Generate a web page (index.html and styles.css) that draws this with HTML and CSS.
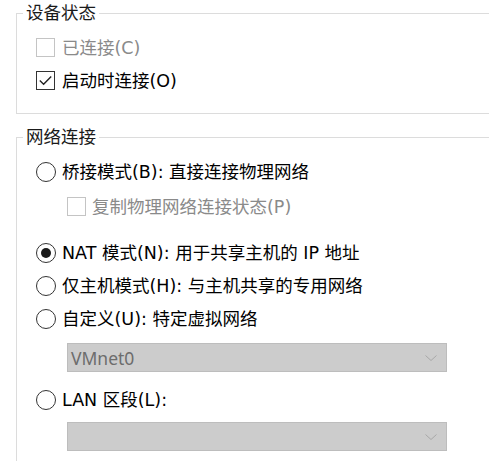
FILE: index.html
```html
<!DOCTYPE html>
<html lang="zh-CN">
<head>
<meta charset="utf-8">
<link rel="stylesheet" href="styles.css">
</head>
<body>
<div class="page">
  <fieldset class="group group-device">
    <legend class="group-title">设备状态</legend>
    <div class="group-body">
      <div class="row disabled">
        <span class="check"></span>
        <span class="label">已连接(C)</span>
      </div>
      <div class="row">
        <span class="check checked">
          <svg viewBox="0 0 19 19" width="19" height="19"><path d="M3.8 9.6 L7.6 13.2 L15.2 5.4" fill="none" stroke="#222" stroke-width="1.4"/></svg>
        </span>
        <span class="label">启动时连接(O)</span>
      </div>
    </div>
  </fieldset>

  <fieldset class="group group-net">
    <legend class="group-title">网络连接</legend>
    <div class="group-body net-body">
      <div class="row">
        <span class="radio"></span>
        <span class="label">桥接模式(B): 直接连接物理网络</span>
      </div>
      <div class="row sub disabled row-replicate">
        <span class="check"></span>
        <span class="label">复制物理网络连接状态(P)</span>
      </div>
      <div class="row row-nat">
        <span class="radio selected"></span>
        <span class="label">NAT 模式(N): 用于共享主机的 IP 地址</span>
      </div>
      <div class="row">
        <span class="radio"></span>
        <span class="label">仅主机模式(H): 与主机共享的专用网络</span>
      </div>
      <div class="row">
        <span class="radio"></span>
        <span class="label">自定义(U): 特定虚拟网络</span>
      </div>
      <div class="select select-custom">
        <span class="select-text">VMnet0</span>
        <svg class="chev" viewBox="0 0 12 7" width="12" height="7"><path d="M0.5 0.5 L6 5.5 L11.5 0.5" fill="none" stroke="#a8a8a8" stroke-width="1"/></svg>
      </div>
      <div class="row row-lan">
        <span class="radio"></span>
        <span class="label">LAN 区段(L):</span>
      </div>
      <div class="select select-lan">
        <span class="select-text"></span>
        <svg class="chev" viewBox="0 0 12 7" width="12" height="7"><path d="M0.5 0.5 L6 5.5 L11.5 0.5" fill="none" stroke="#a8a8a8" stroke-width="1"/></svg>
      </div>
    </div>
  </fieldset>
</div>
</body>
</html>
```
FILE: styles.css
```css
html, body {
  margin: 0;
  padding: 0;
  background: #ffffff;
  overflow: hidden;
}
body {
  width: 489px;
  height: 461px;
  font-family: "DejaVu Sans", "Noto Sans CJK SC", sans-serif;
  font-size: 17.5px;
  color: #000;
}
.page {
  padding-left: 16px;
  height: 461px;
  display: flex;
  flex-direction: column;
}
.group {
  margin: 0;
  padding: 0;
  border: 1px solid #dcdcdc;
  border-right: none;
  min-width: 0;
}
.group-net {
  margin-top: 10px;
  border-bottom: none;
  flex: 1;
}
.group-title {
  margin-left: 6px;
  padding: 0 3px;
  height: 26px;
  line-height: 26px;
  color: #1a1a1a;
}
.group-body {
  padding: 5px 0 16px 19px;
}
.net-body {
  padding-bottom: 0;
}
.row {
  display: flex;
  align-items: center;
  height: 33px;
  gap: 7px;
}
.row.sub {
  padding-left: 31px;
  margin-top: 2px;
  gap: 6px;
}
.row-nat { margin-top: 13px; }
.row-lan { margin-top: 11px; }
.label {
  line-height: 24px;
  white-space: nowrap;
}
.disabled .label {
  color: #8a8a8a;
}
.check {
  width: 17px;
  height: 17px;
  border: 1px solid #333;
  flex: none;
  position: relative;
  background: #fff;
}
.check svg {
  position: absolute;
  left: -1px;
  top: -1px;
}
.disabled .check {
  border-color: #c4c4c4;
}
.radio {
  width: 18px;
  height: 18px;
  border: 1px solid #333;
  border-radius: 50%;
  flex: none;
  display: flex;
  align-items: center;
  justify-content: center;
  background: #fff;
  margin-right: -1px;
}
.radio.selected::after {
  content: "";
  width: 10px;
  height: 10px;
  border-radius: 50%;
  background: #1a1a1a;
}
.select {
  margin-left: 31px;
  height: 27px;
  border: 1px solid #bdbdbd;
  background: #cccccc;
  display: flex;
  align-items: center;
  justify-content: space-between;
  padding: 0 9px 0 3px;
  box-sizing: content-box;
  width: 366px;
}
.select-custom { margin-top: 8px; }
.select-lan { margin-top: 6px; }
.select-text {
  font-family: "Noto Sans", sans-serif;
  color: #6d6d6d;
  line-height: 24px;
}
.chev { flex: none; margin-top: 1px; }
```
